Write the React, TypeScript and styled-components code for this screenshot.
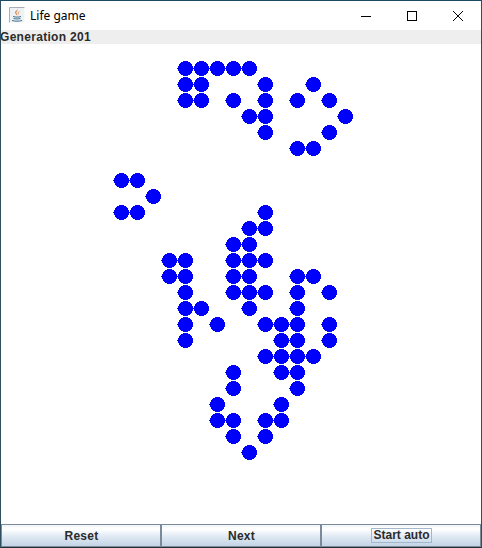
import React, { useState } from 'react';
import styled, { createGlobalStyle } from 'styled-components';

const GlobalStyle = createGlobalStyle`
  html, body {
    margin: 0;
    padding: 0;
    background: #ffffff;
  }
`;

const Frame = styled.div`
  display: flex;
  flex-direction: column;
  box-sizing: border-box;
  width: 482px;
  height: 548px;
  overflow: hidden;
  background: #ffffff;
  border: 1px solid #2f4f60;
  border-top-color: #1d4a63;
  border-bottom-color: #23303a;
`;

const TitleBar = styled.div`
  display: flex;
  align-items: center;
  flex: 0 0 29px;
  height: 29px;
  padding-left: 8px;
  background: #ffffff;
`;

const AppIcon = styled.svg`
  width: 16px;
  height: 16px;
  flex: none;
  margin-bottom: 1px;
`;

const Title = styled.span`
  margin-left: 5px;
  font: 12px 'Noto Sans', 'Open Sans', sans-serif;
  color: #000000;
`;

const WindowButtons = styled.div`
  display: flex;
  margin-left: auto;
`;

const WindowButton = styled.div`
  display: flex;
  align-items: center;
  justify-content: center;
  width: 46px;
  height: 29px;
`;

const StatusLabel = styled.div`
  flex: 0 0 14px;
  height: 14px;
  background: #eeeeee;
  color: #2b2b2b;
  font: bold 12px/14px 'Liberation Sans', Arial, sans-serif;
  letter-spacing: 0.3px;
  text-indent: -1px;
  white-space: nowrap;
`;

const Board = styled.div`
  flex: 1;
  display: grid;
  grid-template-columns: repeat(30, 16px);
  grid-auto-rows: 16px;
  align-content: start;
  background: #ffffff;
`;

const Cell = styled.div`
  width: 16px;
  height: 16px;
`;

const Dot = styled.svg`
  display: block;
  width: 16px;
  height: 16px;
  fill: #0000ff;
`;

const Controls = styled.div`
  display: grid;
  grid-template-columns: 160px 160px 160px;
  flex: 0 0 23px;
  height: 23px;
`;

const ControlButton = styled.button`
  display: flex;
  align-items: center;
  justify-content: center;
  box-sizing: border-box;
  height: 23px;
  margin: 0;
  padding: 0 0 0 1px;
  border: 1px solid #7a8a99;
  background: linear-gradient(#f2f6fa 0%, #ffffff 20%, #dfe9f3 55%, #c4d5e6 100%);
  color: #2b2b2b;
  font: bold 12px 'Liberation Sans', Arial, sans-serif;
  letter-spacing: 0.25px;
`;

const FocusRing = styled.span`
  box-sizing: border-box;
  width: 61px;
  height: 15px;
  line-height: 13px;
  text-align: center;
  letter-spacing: 0;
  white-space: nowrap;
  border: 1px solid #a3b8cc;
`;

// Alive cells per row, as column numbers
const LIVE: Record<number, number[]> = {
  1: [11, 12, 13, 14, 15],
  2: [11, 12, 16, 19],
  3: [11, 12, 14, 16, 18, 20],
  4: [15, 16, 21],
  5: [16, 20],
  6: [18, 19],
  8: [7, 8],
  9: [9],
  10: [7, 8, 16],
  11: [15, 16],
  12: [14, 15],
  13: [10, 11, 14, 15, 16],
  14: [10, 11, 14, 15, 18, 19],
  15: [11, 14, 15, 16, 18, 20],
  16: [11, 12, 15, 18],
  17: [11, 13, 16, 17, 18, 20],
  18: [11, 17, 18, 20],
  19: [16, 17, 18, 19],
  20: [14, 17, 18],
  21: [14, 18],
  22: [13, 17],
  23: [13, 14, 16, 17],
  24: [14, 16],
  25: [15],
};

const ROWS = 29;
const COLS = 30;

const JavaIcon = () => (
  <AppIcon viewBox="0 0 16 16">
    <path d="M15.500 .5H.5v15" fill="none" stroke="#a9aeb3" />
    <path d="M1 1h14.500v14.500H1z" fill="#eef2f5" />
    <path d="M9 1.500c.8 1.700-2.600 2.800-1.500 5 .3.700.9 1.300 1 2.200-1-1-2.600-2-2.200-3.700C6.700 3.500 9.300 3.200 9 1.500z" fill="#d8641c" />
    <path d="M10.500 4.500c-1.600.7-1.700 1.700-.8 3" fill="none" stroke="#e8964f" />
    <path d="M4 9.500c2.300.8 5.700.8 8 0M4.500 11.500c2 .6 5 .6 7 0M3 13.500c3 .9 7 .9 10 0" fill="none" stroke="#3f6f92" />
  </AppIcon>
);

// Aliased oval with the small nub on its left side, as the old graphics call draws it
const LiveDot = () => (
  <Dot viewBox="0 0 16 16" shapeRendering="crispEdges">
    <circle cx="8.500" cy="8.500" r="7.500" />
    <rect x="0" y="8" width="1" height="1" />
  </Dot>
);

const App: React.FC = () => {
  const [generation] = useState(201);

  const cells: boolean[] = [];
  for (let r = 0; r < ROWS; r++) {
    for (let c = 0; c < COLS; c++) {
      cells.push((LIVE[r] || []).includes(c));
    }
  }

  return (
    <Frame>
      <GlobalStyle />
      <TitleBar>
        <JavaIcon />
        <Title>Life game</Title>
        <WindowButtons>
          <WindowButton>
            <svg width="10" height="10" viewBox="0 0 10 10">
              <path d="M0 5.500h10" stroke="#000" fill="none" />
            </svg>
          </WindowButton>
          <WindowButton>
            <svg width="10" height="10" viewBox="0 0 10 10">
              <rect x="0.5" y="0.5" width="9" height="9" stroke="#000" fill="none" />
            </svg>
          </WindowButton>
          <WindowButton>
            <svg width="10" height="10" viewBox="0 0 10 10">
              <path d="M0 0l10 10M10 0L0 10" stroke="#000" fill="none" />
            </svg>
          </WindowButton>
        </WindowButtons>
      </TitleBar>
      <StatusLabel>Generation {generation}</StatusLabel>
      <Board>
        {cells.map((alive, i) => (
          <Cell key={i}>{alive && <LiveDot />}</Cell>
        ))}
      </Board>
      <Controls>
        <ControlButton>Reset</ControlButton>
        <ControlButton>Next</ControlButton>
        <ControlButton>
          <FocusRing>Start auto</FocusRing>
        </ControlButton>
      </Controls>
    </Frame>
  );
};

export default App;
